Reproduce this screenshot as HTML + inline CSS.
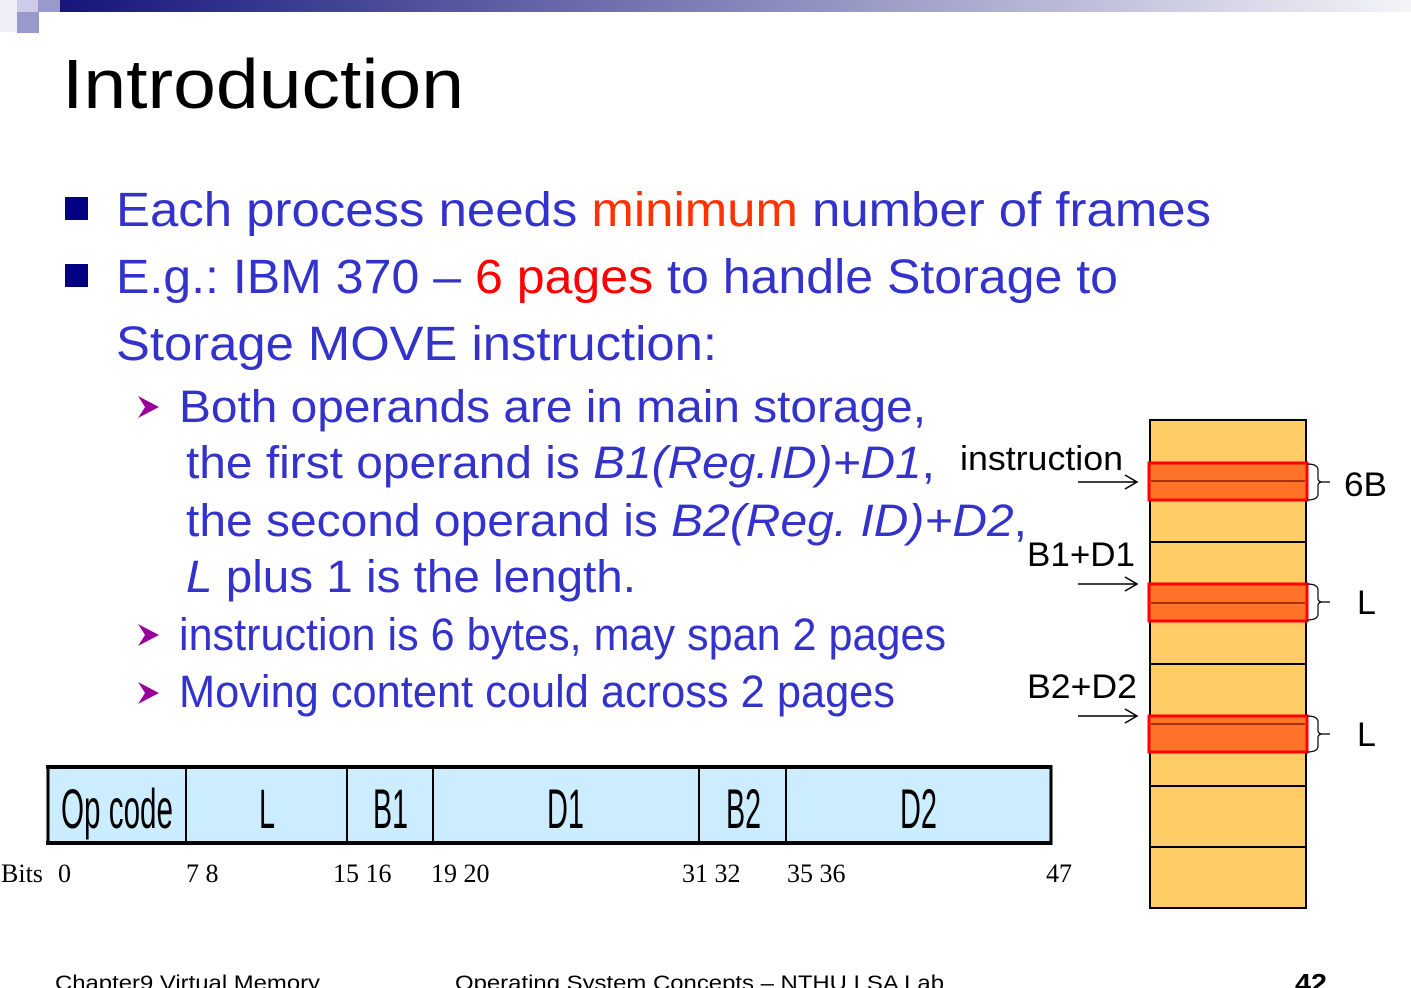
<!DOCTYPE html>
<html><head><meta charset="utf-8"><style>html,body{margin:0;padding:0;background:#fff;overflow:hidden}svg{display:block}</style></head>
<body>
<svg width="1411" height="988" viewBox="0 0 1411 988" xmlns="http://www.w3.org/2000/svg">
<defs><linearGradient id="g" x1="0" x2="1"><stop offset="0" stop-color="#15157c"/><stop offset="1" stop-color="#f4f4f8"/></linearGradient></defs>
<rect x="0" y="0" width="17" height="32" fill="#eeeef8"/>
<rect x="17" y="0" width="21" height="12" fill="#ccccea"/>
<rect x="38" y="0" width="22" height="12" fill="#9999cc"/>
<rect x="17" y="12" width="22" height="21" fill="#9999cc"/>
<rect x="60" y="0" width="1351" height="12" fill="url(#g)"/>
<g font-family="'Liberation Sans',sans-serif">
<text x="62" y="108" font-size="70" fill="#000" textLength="402" lengthAdjust="spacingAndGlyphs">Introduction</text>
<rect x="65" y="197" width="23" height="23" fill="#000080"/>
<rect x="65" y="264" width="23" height="23" fill="#000080"/>
<g font-size="48" fill="#3333cc">
<text x="116" y="226" textLength="1095" lengthAdjust="spacingAndGlyphs">Each process needs <tspan fill="#ff3300">minimum</tspan> number of frames</text>
<text x="116" y="293" textLength="1002" lengthAdjust="spacingAndGlyphs">E.g.: IBM 370 – <tspan fill="#ff0000">6 pages</tspan> to handle Storage to</text>
<text x="116" y="360" textLength="601" lengthAdjust="spacingAndGlyphs">Storage MOVE instruction:</text>
</g>
<g fill="#990099"><path d="M138 396 L159 407 L138 418 L145 407 Z"/><path d="M138 624 L159 635 L138 646 L145 635 Z"/><path d="M138 682 L159 693 L138 704 L145 693 Z"/></g>
<g font-size="45" fill="#3333cc">
<text x="179" y="422" textLength="747" lengthAdjust="spacingAndGlyphs">Both operands are in main storage,</text>
<text x="186" y="478" textLength="749" lengthAdjust="spacingAndGlyphs">the first operand is <tspan font-style="italic">B1(Reg.ID)+D1</tspan>,</text>
<text x="186" y="536" textLength="841" lengthAdjust="spacingAndGlyphs">the second operand is <tspan font-style="italic">B2(Reg. ID)+D2</tspan>,</text>
<text x="186" y="592" textLength="450" lengthAdjust="spacingAndGlyphs"><tspan font-style="italic">L</tspan> plus 1 is the length.</text>
<text x="179" y="650" textLength="767" lengthAdjust="spacingAndGlyphs">instruction is 6 bytes, may span 2 pages</text>
<text x="179" y="707" textLength="716" lengthAdjust="spacingAndGlyphs">Moving content could across 2 pages</text>
</g>
<g font-size="34" fill="#000">
<text x="960" y="470" textLength="163" lengthAdjust="spacingAndGlyphs">instruction</text>
<text x="1027" y="566" textLength="108" lengthAdjust="spacingAndGlyphs">B1+D1</text>
<text x="1027" y="698" textLength="110" lengthAdjust="spacingAndGlyphs">B2+D2</text>
<text x="1344" y="496" textLength="43" lengthAdjust="spacingAndGlyphs">6B</text>
<text x="1357" y="614">L</text>
<text x="1357" y="746">L</text>
</g>
</g>
<g stroke="#000" stroke-width="1.5" fill="none">
<path d="M1078 482 H1137 M1125 475 L1137 482 L1125 489"/>
<path d="M1078 584 H1137 M1125 577 L1137 584 L1125 591"/>
<path d="M1078 716 H1137 M1125 709 L1137 716 L1125 723"/>
</g>
<rect x="1150" y="420" width="156" height="488" fill="#ffcc66" stroke="#000" stroke-width="2"/>
<g stroke="#000" stroke-width="2"><line x1="1150" y1="542" x2="1306" y2="542"/><line x1="1150" y1="664" x2="1306" y2="664"/><line x1="1150" y1="786" x2="1306" y2="786"/><line x1="1150" y1="847" x2="1306" y2="847"/></g>
<g fill="#ff7329" stroke="#ff0000" stroke-width="3">
<rect x="1149" y="463" width="158" height="37"/><rect x="1149" y="584" width="158" height="37"/><rect x="1149" y="716" width="158" height="36"/>
</g>
<g stroke="#8b1a00" stroke-width="1.5"><line x1="1151" y1="481" x2="1305" y2="481"/><line x1="1151" y1="603" x2="1305" y2="603"/><line x1="1151" y1="724" x2="1305" y2="724"/></g>
<g stroke="#000" stroke-width="1.2" fill="none">
<path d="M1307 464 Q1318 464 1318 470 V478 Q1318 482 1322 482 Q1318 482 1318 486 V494 Q1318 500 1307 500 M1322 482 H1330"/>
<path d="M1307 584 Q1318 584 1318 590 V598 Q1318 602 1322 602 Q1318 602 1318 606 V614 Q1318 620 1307 620 M1322 602 H1330"/>
<path d="M1307 716 Q1318 716 1318 722 V730 Q1318 734 1322 734 Q1318 734 1318 738 V746 Q1318 752 1307 752 M1322 734 H1330"/>
</g>
<rect x="47" y="765" width="1005" height="80" fill="#ccecff"/>
<g stroke="#000"><line x1="46" y1="767" x2="1052" y2="767" stroke-width="4"/><line x1="46" y1="843" x2="1052" y2="843" stroke-width="4"/>
<line x1="48" y1="765" x2="48" y2="845" stroke-width="3"/><line x1="1051" y1="765" x2="1051" y2="845" stroke-width="3"/>
<g stroke-width="2"><line x1="186" y1="765" x2="186" y2="845"/><line x1="347" y1="765" x2="347" y2="845"/><line x1="433" y1="765" x2="433" y2="845"/><line x1="699" y1="765" x2="699" y2="845"/><line x1="786" y1="765" x2="786" y2="845"/></g></g>
<g font-family="'Liberation Sans',sans-serif" font-size="56" fill="#000">
<text x="61" y="828" textLength="112" lengthAdjust="spacingAndGlyphs">Op code</text>
<text x="259" y="828" textLength="16" lengthAdjust="spacingAndGlyphs">L</text>
<text x="373" y="828" textLength="35" lengthAdjust="spacingAndGlyphs">B1</text>
<text x="547" y="828" textLength="37" lengthAdjust="spacingAndGlyphs">D1</text>
<text x="726" y="828" textLength="35" lengthAdjust="spacingAndGlyphs">B2</text>
<text x="900" y="828" textLength="37" lengthAdjust="spacingAndGlyphs">D2</text>
</g>
<g font-family="'Liberation Serif',serif" font-size="26" fill="#000">
<text x="1" y="882">Bits</text><text x="58" y="882">0</text><text x="186" y="882">7 8</text><text x="333" y="882">15 16</text><text x="431" y="882">19 20</text><text x="682" y="882">31 32</text><text x="787" y="882">35 36</text><text x="1046" y="882">47</text>
</g>
<g font-family="'Liberation Sans',sans-serif" font-size="21" fill="#000">
<text x="55" y="990" textLength="265" lengthAdjust="spacingAndGlyphs">Chapter9 Virtual Memory</text>
<text x="455" y="990" textLength="489" lengthAdjust="spacingAndGlyphs">Operating System Concepts – NTHU LSA Lab</text>
<text x="1295" y="992" font-weight="bold" font-size="26" textLength="32" lengthAdjust="spacingAndGlyphs">42</text>
</g>
</svg>
</body></html>
